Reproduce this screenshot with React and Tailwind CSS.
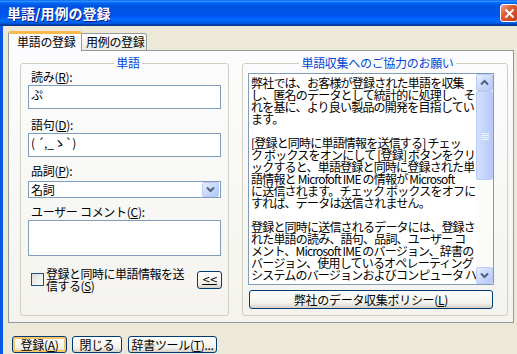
const lines = [
  "弊社では、お客様が登録された単語を収集",
  "し、匿名のデータとして統計的に処理し、そ",
  "れを基に、より良い製品の開発を目指してい",
  "ます。",
  "\u00a0",
  "[登録と同時に単語情報を送信する] チェッ",
  "ク ボックスをオンにして [登録] ボタンをクリ",
  "ックすると、単語登録と同時に登録された単",
  "語情報と Microfoft IME の情報が Microsoft",
  "に送信されます。チェック ボックスをオフに",
  "すれば、データは送信されません。",
  "\u00a0",
  "登録と同時に送信されるデータには、登録さ",
  "れた単語の読み、語句、品詞、ユーザー コ",
  "メント、Microsoft IME のバージョン、辞書の",
  "バージョン、使用しているオペレーティング",
  "システムのバージョンおよびコンピュータ ハ",
];

function Chevron({ up }) {
  return (
    <svg width="9" height="7" viewBox="0 0 9 7">
      <path
        d={up ? "M1 5.5 L4.5 2 L8 5.5" : "M1 1.5 L4.5 5 L8 1.5"}
        fill="none"
        stroke="#4D6185"
        strokeWidth="2"
      />
    </svg>
  );
}

function ScrollBtn({ up }) {
  return (
    <div className="w-[17px] h-[17px] flex items-center justify-center rounded-[2px] border border-[#B9CBF5] bg-[linear-gradient(135deg,#E6EEFC,#C6D6FB_60%,#B3C8F5)]">
      <Chevron up={up} />
    </div>
  );
}

const btn =
  "h-[17px] flex items-center justify-center rounded-[3px] border border-[#003C74] bg-[linear-gradient(to_bottom,#FFFFFF,#F3F2EC_70%,#D6D0C5)]";

export default function App() {
  return (
    <div className="w-[517px] h-[354px] overflow-hidden flex flex-col bg-[#ECE9D8] font-['Noto_Sans_CJK_JP',sans-serif] text-[12px] leading-[12px] tracking-[-0.3px] text-black">
      <div className="h-[26px] shrink-0 flex items-start bg-[linear-gradient(to_bottom,#0058EE_0%,#3593FF_4%,#288EFF_6%,#127DFF_8%,#036FFC_10%,#0262EE_14%,#0057E5_20%,#0054E3_24%,#0055EB_56%,#005BF5_66%,#026AFE_76%,#0062EF_86%,#0052D6_92%,#0040AB_94%,#003092_100%)]">
        <div className="pl-[7px] pt-[5px] text-white font-bold text-[14px] leading-[16px] tracking-normal [text-shadow:1px_1px_0_#0A1883]">
          単語/用例の登録
        </div>
        <div className="flex-1" />
        <div className="mt-[4px] mr-[-1px] w-[18px] h-[18px] shrink-0 flex items-center justify-center rounded-[3px] border border-white bg-[linear-gradient(135deg,#F2A68E,#E15A33_40%,#C43C17)]">
          <svg width="11" height="11" viewBox="0 0 11 11">
            <path d="M1.5 1.5 L9.5 9.5 M9.5 1.5 L1.5 9.5" stroke="white" strokeWidth="2" />
          </svg>
        </div>
      </div>

      <div className="flex-1 border-l-[3px] border-[#0A58E8] pl-[5px] pt-[5px]">
        <div className="flex items-end h-[20px]">
          <div className="relative z-10 w-[74px] h-[20px] bg-[#FCFCFE] border-x border-[#919B9C] border-t-[3px] border-t-[#F9B94B] rounded-t-[3px] pl-[8px] pt-[2px]">
            単語の登録
          </div>
          <div className="w-[65px] h-[18px] border border-[#919B9C] border-l-0 rounded-tr-[3px] bg-[linear-gradient(to_bottom,#FFFFFF,#ECEBE6)] pl-[4px] pt-[2px]">
            用例の登録
          </div>
        </div>

        <div className="mt-[-1px] w-[506px] h-[273px] border border-[#919B9C] bg-[linear-gradient(to_bottom,#FCFCFE,#F4F3EE)] flex pl-[11px] pt-[6px] gap-[13px]">
          <fieldset className="w-[209px] h-[259px] border border-[#D0D0BF] rounded-[3px] pl-[7px]">
            <legend className="mx-auto px-[2px] text-[#0046D5]">単語</legend>
            <div className="mt-[2px] ml-[3px] h-[12px]">
              読み(<span className="underline">R</span>):
            </div>
            <div className="mt-[2px] w-[193px] h-[24px] border border-[#7F9DB9] bg-white pl-[2px] pt-[3px]">
              ぷ
            </div>
            <div className="mt-[10px] ml-[3px] h-[12px]">
              語句(<span className="underline">D</span>):
            </div>
            <div className="mt-[2px] w-[193px] h-[24px] border border-[#7F9DB9] bg-white pl-[2px] pt-[3px] whitespace-pre">
              ( ´,_ゝ`)
            </div>
            <div className="mt-[8px] ml-[3px] h-[12px]">
              品詞(<span className="underline">P</span>):
            </div>
            <div className="mt-[4px] w-[193px] h-[17px] border border-[#7F9DB9] bg-white flex items-center">
              <div className="flex-1 pl-[2px]">名詞</div>
              <div className="mr-[1px] w-[17px] h-[15px] flex items-center justify-center rounded-[2px] border border-[#B9CBF5] bg-[linear-gradient(135deg,#E6EEFC,#C6D6FB_60%,#B3C8F5)]">
                <Chevron />
              </div>
            </div>
            <div className="mt-[8px] ml-[3px] h-[12px] whitespace-pre">
              ユーザー コメント(<span className="underline">C</span>):
            </div>
            <div className="mt-[2px] w-[193px] h-[36px] border border-[#7F9DB9] bg-white" />
            <div className="mt-[12px] flex w-[194px]">
              <div className="ml-[3px] mt-[5px] w-[13px] h-[13px] shrink-0 border border-[#1C5180] bg-[linear-gradient(135deg,#DCDCD7,#FFFFFF)]" />
              <div className="ml-[2px] tracking-[-0.5px]">
                登録と同時に単語情報を送
                <br />
                信する(<span className="underline">S</span>)
              </div>
              <div className="ml-auto mt-[3px] w-[25px] h-[18px] shrink-0 flex items-center justify-center rounded-[3px] border border-[#003C74] bg-[linear-gradient(to_bottom,#FFFFFF,#F3F2EC_70%,#D6D0C5)] font-['DejaVu_Sans',sans-serif] text-[10px] tracking-[-1px]">
                <span className="underline">&lt;&lt;</span>
              </div>
            </div>
          </fieldset>

          <fieldset className="w-[266px] h-[259px] border border-[#D0D0BF] rounded-[3px] pl-[5px]">
            <legend className="mx-auto px-[2px] text-[#0046D5]">単語収集へのご協力のお願い</legend>
            <div className="mt-[4px] w-[246px] h-[212px] border border-[#7F9DB9] bg-white flex">
              <div className="flex-1 overflow-hidden pl-[2px] pt-[3px] tracking-[-0.8px]">
                {lines.map((l, i) => (
                  <div key={i} className="h-[12px] whitespace-pre">
                    {l}
                  </div>
                ))}
              </div>
              <div className="w-[17px] shrink-0 flex flex-col bg-[#FBFBF8]">
                <ScrollBtn up />
                <div className="h-[89px] flex items-center justify-center rounded-[2px] border border-[#B9CBF5] bg-[linear-gradient(to_right,#D3E0FD,#C4D4FC_50%,#B7CAF6)]">
                  <svg width="8" height="8" viewBox="0 0 8 8">
                    <path d="M0 1.5 H8 M0 3.5 H8 M0 5.5 H8 M0 7.5 H8" stroke="#EEF4FE" strokeWidth="1" />
                  </svg>
                </div>
                <div className="flex-1" />
                <ScrollBtn />
              </div>
            </div>
            <div className="mt-[5px] ml-[1px] w-[244px] h-[19px] flex items-center justify-center rounded-[3px] border border-[#003C74] bg-[linear-gradient(to_bottom,#FFFFFF,#F3F2EC_70%,#D6D0C5)]">
              弊社のデータ収集ポリシー(<span className="underline">L</span>)
            </div>
          </fieldset>
        </div>

        <div className="mt-[13px] ml-[4px] flex">
          <div className={`${btn} w-[55px] shadow-[inset_0_0_0_2px_#F9C56A]`}>
            登録(<span className="underline">A</span>)
          </div>
          <div className={`${btn} ml-[5px] w-[50px]`}>閉じる</div>
          <div className={`${btn} ml-[6px] w-[89px]`}>
            辞書ツール(<span className="underline">T</span>)...
          </div>
        </div>
      </div>
    </div>
  );
}
